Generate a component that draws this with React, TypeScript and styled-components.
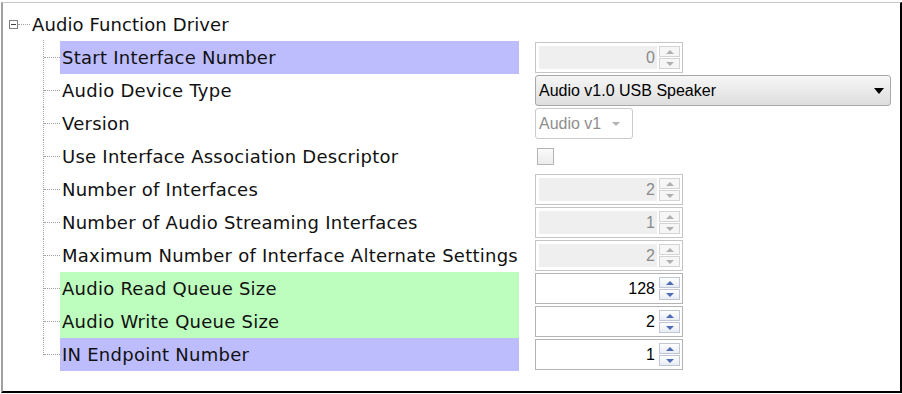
import React from "react";
import styled, { createGlobalStyle, css } from "styled-components";

const Global = createGlobalStyle`
  html, body { margin: 0; padding: 0; background: #ffffff; }
  body { padding: 2px 0 1px 1px; }
  * { box-sizing: border-box; }
`;

const Frame = styled.div`
  width: 901px;
  height: 391px;
  border-top: 1px solid #c8c8c8;
  border-left: 2px solid #a0a0a0;
  border-right: 2px solid #000;
  border-bottom: 2px solid #000;
  background: #fff;
  padding-top: 5px;
  font-family: "DejaVu Sans", Verdana, sans-serif;
  font-size: 18px;
  letter-spacing: 0.25px;
  color: #111;
`;

const HeaderRow = styled.div`
  height: 33px;
  display: flex;
  align-items: center;
  padding-left: 6px;
`;

const Expander = styled.span`
  width: 9px;
  height: 9px;
  border: 1px solid #808080;
  position: relative;
  flex: none;
  &::after {
    content: "";
    position: absolute;
    left: 1px;
    right: 1px;
    top: 3px;
    height: 1px;
    background: #404040;
  }
`;

const HeaderConnector = styled.span`
  width: 12px;
  margin: 0 2px 0 0;
  border-top: 1px dotted #a0a0a0;
  align-self: center;
`;

const HeaderLabel = styled.span`
  line-height: 33px;
  letter-spacing: 0.1px;
`;

const Row = styled.div`
  height: 33px;
  display: grid;
  grid-template-columns: 57px 459px 16px 1fr;
  align-items: stretch;
`;

const Gutter = styled.div<{ $first?: boolean; $last?: boolean }>`
  position: relative;
  &::before {
    content: "";
    position: absolute;
    left: 40px;
    top: ${(p) => (p.$first ? "-1px" : "0")};
    height: ${(p) => (p.$last ? "17px" : "33px")};
    border-left: 1px dotted #a0a0a0;
  }
  &::after {
    content: "";
    position: absolute;
    left: 41px;
    width: 16px;
    top: 16px;
    border-top: 1px dotted #a0a0a0;
  }
`;

const Label = styled.div<{ $tone?: "blue" | "green" }>`
  line-height: 33px;
  padding-left: 2px;
  white-space: nowrap;
  ${(p) =>
    p.$tone === "blue" &&
    css`
      background: #bdbdfe;
    `}
  ${(p) =>
    p.$tone === "green" &&
    css`
      background: #bdfdbd;
    `}
`;

const ValueCell = styled.div`
  grid-column: 4;
  display: flex;
  align-items: center;
  font-family: "Liberation Sans", Arial, sans-serif;
  font-size: 15px;
  letter-spacing: 0;
`;

const SpinBox = styled.div<{ $disabled?: boolean }>`
  width: 148px;
  height: 31px;
  border: 1px solid ${(p) => (p.$disabled ? "#c4c4c4" : "#b4b4b4")};
  background: #fff;
  padding: 3px 2px 3px 3px;
  display: flex;
  gap: 2px;
`;

const SpinField = styled.div<{ $disabled?: boolean }>`
  flex: 1;
  background: ${(p) => (p.$disabled ? "#efefef" : "#ffffff")};
  color: ${(p) => (p.$disabled ? "#8a8a8a" : "#000")};
  text-align: right;
  padding-right: 2px;
  line-height: 23px;
  font-size: 16px;
`;

const SpinButtons = styled.div`
  width: 21px;
  display: flex;
  flex-direction: column;
  gap: 1px;
`;

const SpinButton = styled.div<{ $disabled?: boolean }>`
  flex: 1;
  border: 1px solid ${(p) => (p.$disabled ? "#d4d4d4" : "#c0c6d4")};
  background: ${(p) =>
    p.$disabled ? "#f6f6f6" : "linear-gradient(#ffffff, #e8ecf4)"};
  display: flex;
  align-items: center;
  justify-content: center;
`;

const Arrow = styled.span<{ $dir: "up" | "down"; $disabled?: boolean }>`
  width: 0;
  height: 0;
  border-left: 4px solid transparent;
  border-right: 4px solid transparent;
  ${(p) =>
    p.$dir === "up"
      ? css`
          border-bottom: 4px solid ${p.$disabled ? "#b0b0b0" : "#4e6cb4"};
        `
      : css`
          border-top: 4px solid ${p.$disabled ? "#b0b0b0" : "#4e6cb4"};
        `}
`;

const Combo = styled.div`
  width: 356px;
  height: 31px;
  border: 1px solid #a8a8a8;
  border-radius: 3px;
  background: linear-gradient(#f6f6f6, #dedede);
  display: flex;
  align-items: center;
  justify-content: space-between;
  padding: 0 6px 0 3px;
  font-size: 16px;
  color: #000;
`;

const ComboArrow = styled.span<{ $small?: boolean }>`
  width: 0;
  height: 0;
  border-left: ${(p) => (p.$small ? 4 : 5)}px solid transparent;
  border-right: ${(p) => (p.$small ? 4 : 5)}px solid transparent;
  border-top: ${(p) => (p.$small ? 4 : 6)}px solid
    ${(p) => (p.$small ? "#b4b4b4" : "#000")};
`;

const SmallCombo = styled.div`
  width: 98px;
  height: 31px;
  border: 1px solid #cacaca;
  border-radius: 3px;
  background: #fff;
  display: flex;
  align-items: center;
  justify-content: space-between;
  padding: 0 12px 0 3px;
  font-size: 16px;
  color: #8e8e8e;
`;

const Check = styled.div`
  width: 17px;
  height: 17px;
  margin-left: 2px;
  border: 1px solid #b4b4b4;
  background: linear-gradient(#fafafa, #ececec);
`;

type Tone = "blue" | "green" | undefined;

type Item =
  | { label: string; tone?: Tone; kind: "spin"; value: string; disabled?: boolean }
  | { label: string; tone?: Tone; kind: "combo"; value: string }
  | { label: string; tone?: Tone; kind: "small"; value: string }
  | { label: string; tone?: Tone; kind: "check" };

const items: Item[] = [
  { label: "Start Interface Number", tone: "blue", kind: "spin", value: "0", disabled: true },
  { label: "Audio Device Type", kind: "combo", value: "Audio v1.0 USB Speaker" },
  { label: "Version", kind: "small", value: "Audio v1" },
  { label: "Use Interface Association Descriptor", kind: "check" },
  { label: "Number of Interfaces", kind: "spin", value: "2", disabled: true },
  { label: "Number of Audio Streaming Interfaces", kind: "spin", value: "1", disabled: true },
  { label: "Maximum Number of Interface Alternate Settings", kind: "spin", value: "2", disabled: true },
  { label: "Audio Read Queue Size", tone: "green", kind: "spin", value: "128" },
  { label: "Audio Write Queue Size", tone: "green", kind: "spin", value: "2" },
  { label: "IN Endpoint Number", tone: "blue", kind: "spin", value: "1" },
];

function Spinner({ value, disabled }: { value: string; disabled?: boolean }) {
  return (
    <SpinBox $disabled={disabled}>
      <SpinField $disabled={disabled}>{value}</SpinField>
      <SpinButtons>
        <SpinButton $disabled={disabled}>
          <Arrow $dir="up" $disabled={disabled} />
        </SpinButton>
        <SpinButton $disabled={disabled}>
          <Arrow $dir="down" $disabled={disabled} />
        </SpinButton>
      </SpinButtons>
    </SpinBox>
  );
}

function Editor({ item }: { item: Item }) {
  switch (item.kind) {
    case "spin":
      return <Spinner value={item.value} disabled={item.disabled} />;
    case "combo":
      return (
        <Combo>
          <span>{item.value}</span>
          <ComboArrow />
        </Combo>
      );
    case "small":
      return (
        <SmallCombo>
          <span>{item.value}</span>
          <ComboArrow $small />
        </SmallCombo>
      );
    case "check":
      return <Check />;
  }
}

export default function App() {
  return (
    <>
      <Global />
      <Frame>
        <HeaderRow>
          <Expander />
          <HeaderConnector />
          <HeaderLabel>Audio Function Driver</HeaderLabel>
        </HeaderRow>
        {items.map((it, i) => (
          <Row key={it.label}>
            <Gutter $first={i === 0} $last={i === items.length - 1} />
            <Label $tone={it.tone}>{it.label}</Label>
            <ValueCell>
              <Editor item={it} />
            </ValueCell>
          </Row>
        ))}
      </Frame>
    </>
  );
}
